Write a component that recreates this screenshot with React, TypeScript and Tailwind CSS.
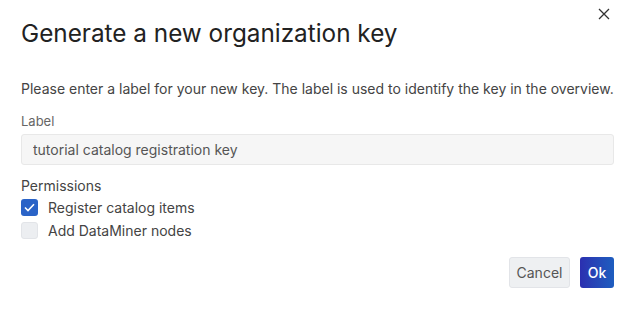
import React, { useState } from 'react'

export default function App() {
  const [register, setRegister] = useState(true)
  const [nodes, setNodes] = useState(false)

  return (
    <div className="relative w-[632px] h-[312px] bg-white text-[#333] font-['Inter','Noto_Sans',sans-serif]">
      <button className="absolute right-[20px] top-[6px] w-[16px] h-[16px] flex items-center justify-center text-[#333]">
        <svg width="12" height="12" viewBox="0 0 12 12" fill="none" stroke="currentColor" strokeWidth="1.3">
          <path d="M1 1L11 11M11 1L1 11" />
        </svg>
      </button>

      <div className="pl-[21px] pr-[18px] pt-[17px]">
        <h1 className="text-[24.3px] leading-[32px] text-[#222] font-normal">Generate a new organization key</h1>

        <p className="mt-[30px] text-[14px] leading-[20px] text-[#444]">
          Please enter a label for your new key. The label is used to identify the key in the overview.
        </p>

        <label className="block mt-[14px] text-[13px] leading-[16px] text-[#666]">Label</label>
        <input
          className="mt-[5px] block w-full h-[31px] px-[11px] rounded-[3px] border border-[#e8e8e8] bg-[#f6f6f6] text-[14px] text-[#555] outline-none"
          defaultValue="tutorial catalog registration key"
        />

        <div className="mt-[11px] text-[14px] leading-[20px] text-[#444]">Permissions</div>
        <div className="mt-[3px] flex flex-col gap-[6px]">
          <label className="flex items-center gap-[10px] cursor-pointer" onClick={() => setRegister(!register)}>
            <span className={`w-[17px] h-[17px] rounded-[3px] flex items-center justify-center ${register ? 'bg-[#2a63c7]' : 'bg-[#eceef1] border border-[#e2e4e8]'}`}>
              {register && (
                <svg width="11" height="9" viewBox="0 0 11 9" fill="none" stroke="white" strokeWidth="1.6">
                  <path d="M1 4.5L4 7.5L10 1.2" />
                </svg>
              )}
            </span>
            <span className="text-[14px] leading-[17px] text-[#444]">Register catalog items</span>
          </label>
          <label className="flex items-center gap-[10px] cursor-pointer" onClick={() => setNodes(!nodes)}>
            <span className={`w-[17px] h-[17px] rounded-[3px] flex items-center justify-center ${nodes ? 'bg-[#2a63c7]' : 'bg-[#eceef1] border border-[#e2e4e8]'}`}>
              {nodes && (
                <svg width="11" height="9" viewBox="0 0 11 9" fill="none" stroke="white" strokeWidth="1.6">
                  <path d="M1 4.5L4 7.5L10 1.2" />
                </svg>
              )}
            </span>
            <span className="text-[14px] leading-[17px] text-[#444]">Add DataMiner nodes</span>
          </label>
        </div>

        <div className="mt-[18px] flex justify-end gap-[10px]">
          <button className="h-[31px] w-[61px] rounded-[3px] border border-[#e2e4e8] bg-[#eef0f2] text-[14px] text-[#555]">Cancel</button>
          <button className="h-[31px] w-[34px] rounded-[3px] bg-gradient-to-r from-[#2b2fb0] to-[#1d5dbf] text-[14px] font-medium text-white">Ok</button>
        </div>
      </div>
    </div>
  )
}
